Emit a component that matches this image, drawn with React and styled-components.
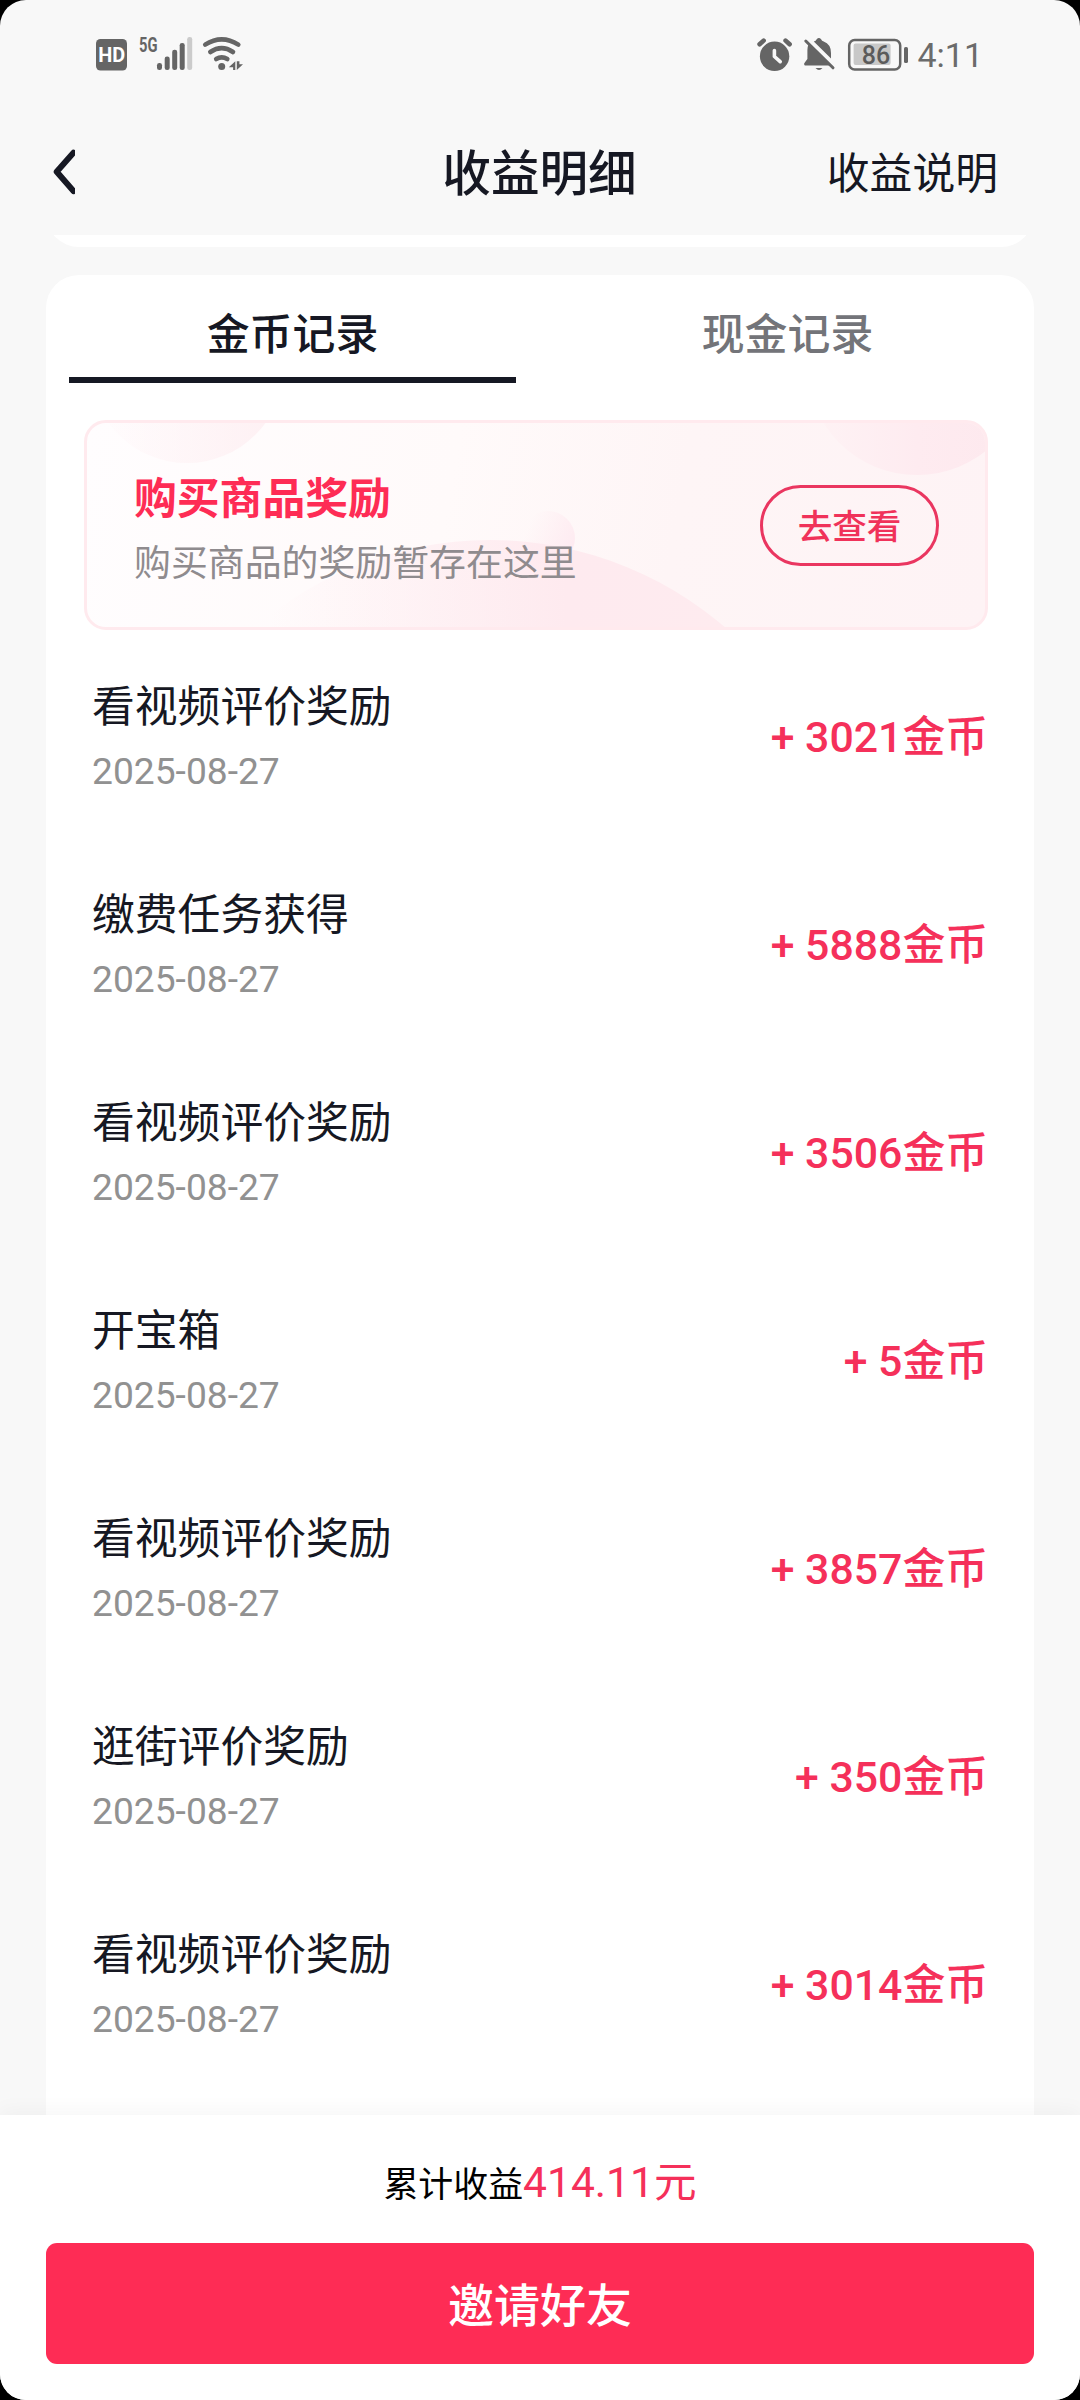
import { useState } from 'react';
import styled, { createGlobalStyle } from 'styled-components'

const GlobalStyle = createGlobalStyle`
    * {
        box-sizing: border-box;
    }

    body {
        margin: 0;
        background: #000;
        font-family: Roboto, "Noto Sans CJK SC", sans-serif;
        color: #161823;
    }
`

const Screen = styled.div`
    width: 1080px;
    height: 2400px;
    display: flex;
    flex-direction: column;
    overflow: hidden;
    border-radius: 26px;
    background: #f8f8f8;
`

const StatusBar = styled.div`
    flex: none;
    height: 108px;
    padding: 0 97px 0 96px;
    display: flex;
    justify-content: space-between;
    align-items: center;
    color: #656565;
`

const StatusGroup = styled.div`
    display: flex;
    align-items: center;
`

const Clock = styled.span`
    margin-left: 9px;
    padding-top: 1px;
    font-size: 34px;
    line-height: 40px;
    color: #6b6b6b;
`

const Header = styled.header`
    flex: none;
    height: 127px;
    padding: 0 82px 0 53px;
    display: grid;
    grid-template-columns: 1fr auto 1fr;
    align-items: center;
`

const BackButton = styled.button`
    display: flex;
    padding: 0;
    border: none;
    background: none;
    cursor: pointer;
`

const PageTitle = styled.h1`
    margin: 0;
    padding-top: 6px;
    transform: translateX(14px);
    font-size: 48.6px;
    line-height: 64px;
    font-weight: 500;
`

const HelpLink = styled.span`
    justify-self: end;
    padding-top: 5px;
    font-size: 42.8px;
    line-height: 64px;
`

const Body = styled.main`
    flex: 1;
    min-height: 0;
    display: flex;
    flex-direction: column;
    overflow: hidden;
    padding: 0 46px;
`

// bottom edge of the summary card, scrolled under the header
const SummaryCard = styled.div`
    flex: none;
    height: 100px;
    margin-top: -88.3px;
    border-radius: 33px;
    background: #fff;
`

const RecordCard = styled.section`
    flex: 1 0 auto;
    margin-top: 28px;
    border-radius: 33px 33px 0 0;
    background: #fff;
`

const Tabs = styled.div`
    display: flex;
    justify-content: space-between;
    padding: 0 23px;
`

const Tab = styled.button`
    width: 447px;
    height: 108px;
    padding: 19px 0 0;
    border: none;
    border-bottom: 6px solid ${props => props.$active ? '#161823' : 'transparent'};
    background: none;
    font-family: inherit;
    font-size: 42.9px;
    line-height: 60px;
    font-weight: 500;
    color: ${props => props.$active ? '#161823' : '#737479'};
    cursor: pointer;
`

const Banner = styled.div`
    position: relative;
    height: 210px;
    margin: 37px 46px 0 38px;
    padding: 0 46px 0 47px;
    display: flex;
    justify-content: space-between;
    align-items: center;
    overflow: hidden;
    border: 3px solid #ffeaee;
    border-radius: 22px;
    background: linear-gradient(100deg, #fffdfe 0%, #fffafa 40%, #fef5f6 65%, #fef3f5 100%);
`

const BannerArt = styled.svg`
    position: absolute;
    left: -3px;
    top: -3px;
`

const BannerText = styled.div`
    position: relative;
    display: flex;
    flex-direction: column;
    gap: 9px;
    padding-top: 10px;
`

const BannerTitle = styled.span`
    font-size: 42.8px;
    line-height: 60px;
    font-weight: 700;
    color: #fe2c55;
`

const BannerNote = styled.span`
    font-size: 36.9px;
    line-height: 52px;
    color: #8f8b8e;
`

const ViewButton = styled.button`
    position: relative;
    width: 179px;
    height: 81px;
    margin-top: 2px;
    padding: 3px 0 0;
    border: 3px solid #ea3660;
    border-radius: 41px;
    background: none;
    font-family: inherit;
    font-size: 34.6px;
    line-height: 50px;
    font-weight: 500;
    color: #f0325a;
    cursor: pointer;
`

const RecordList = styled.ul`
    margin: 3px 0 0;
    padding: 0 46px;
    list-style: none;
`

const RecordRow = styled.li`
    height: 208px;
    display: flex;
    justify-content: space-between;
    align-items: center;
`

const RecordInfo = styled.div`
    display: flex;
    flex-direction: column;
    gap: 8px;
`

const RecordName = styled.span`
    font-size: 42.8px;
    line-height: 60px;
`

const RecordDate = styled.span`
    font-size: 37.2px;
    line-height: 52px;
    color: #919191;
`

const Amount = styled.span`
    padding-top: 1px;
    font-size: 42.8px;
    line-height: 60px;
    font-weight: 500;
    color: #f5305a;
`

const Footer = styled.footer`
    position: relative;
    flex: none;
    height: 285px;
    padding: 35px 46px 36px;
    display: flex;
    flex-direction: column;
    justify-content: space-between;
    background: #fff;
    box-shadow: 0 -4px 20px rgba(0, 0, 0, 0.04);
`

const Total = styled.div`
    text-align: center;
    font-size: 34.9px;
    line-height: 64px;
    color: #000;
`

const TotalValue = styled.span`
    font-size: 42.6px;
    color: #f5305a;
`

const InviteButton = styled.button`
    height: 121px;
    padding: 5px 0 0;
    border: none;
    border-radius: 11px;
    background: #fe2c55;
    font-family: inherit;
    font-size: 46px;
    line-height: 64px;
    font-weight: 500;
    color: #fff;
    cursor: pointer;
`

const records = [
    { name: '看视频评价奖励', date: '2025-08-27', coins: 3021 },
    { name: '缴费任务获得', date: '2025-08-27', coins: 5888 },
    { name: '看视频评价奖励', date: '2025-08-27', coins: 3506 },
    { name: '开宝箱', date: '2025-08-27', coins: 5 },
    { name: '看视频评价奖励', date: '2025-08-27', coins: 3857 },
    { name: '逛街评价奖励', date: '2025-08-27', coins: 350 },
    { name: '看视频评价奖励', date: '2025-08-27', coins: 3014 },
]

const SignalIcons = () => (
    <svg width="150" height="52" viewBox="96 28 150 52" fill="currentColor">
        <rect x="96" y="39" width="31" height="31.5" rx="4.5" />
        <text x="98.3" y="61.8" fontSize="20.5" fontWeight="700" fill="#fff" textLength="27" lengthAdjust="spacingAndGlyphs">HD</text>
        <text x="139" y="52" fontSize="20.5" fontWeight="700" textLength="18.5" lengthAdjust="spacingAndGlyphs">5G</text>
        <rect x="157" y="63" width="5" height="7" rx="2.3" />
        <rect x="164.7" y="56.5" width="5" height="13.5" rx="2.3" />
        <rect x="172.2" y="49.7" width="5" height="20.3" rx="2.3" />
        <rect x="179.7" y="43" width="5" height="27" rx="2.3" />
        <rect x="187.2" y="37" width="5" height="33" rx="2.3" fill="#cbcbcb" />
        <g fill="none" stroke="currentColor" strokeWidth="4.6" strokeLinecap="round">
            <path d="M205.2 44.6Q221.7 34.2 238.3 44.6" />
            <path d="M210.3 52Q221.7 44.2 233 52" />
            <path d="M216.2 59Q221.7 55.6 227.3 59" />
        </g>
        <circle cx="221.7" cy="66.6" r="3.5" />
        <path d="M235.300 61.300V70h-2.200v-2.700H228.800zM236.800 70v-8.700h2.600V64.200h3.600z" />
    </svg>
)

const DeviceIcons = () => (
    <svg width="151" height="52" viewBox="757 28 151 52" fill="currentColor">
        <circle cx="774.6" cy="56.3" r="14.7" />
        <g fill="none" stroke="currentColor" strokeWidth="4.6" strokeLinecap="round">
            <path d="M759.6 44.2l4-3.6M789.6 44.2l-4-3.6" />
        </g>
        <path d="M774.4 50.5v6l5.8 5.2" fill="none" stroke="#f8f8f8" strokeWidth="3.6" strokeLinecap="round" strokeLinejoin="round" />
        <path d="M808.6 44L830.5 65.6H804.8q-1.6-1.400 0-3l2.600-3.600V50q0-3 1.200-6zM813.800 41.600q2.200-.700 2.900-2.400 2.200-2.200 4.400 0 .700 1.700 2.600 2.300 7.300 2.700 7.300 11.500v5.500z" />
        <path d="M805.800 41L833 67.800" fill="none" stroke="currentColor" strokeWidth="3" strokeLinecap="round" />
        <path d="M815.500 68h7q-3.500 3.800-7 0z" />
        <rect x="849.2" y="40" width="51" height="29.400" rx="5.500" fill="none" stroke="currentColor" strokeWidth="2.500" />
        <rect x="853.600" y="43.600" width="37" height="21.400" rx="2" fill="#c8c8c8" />
        <text x="861.700" y="64" fontSize="25" fontWeight="500" fill="#5b5b5b">86</text>
        <rect x="904" y="47" width="4" height="16" rx="1.600" />
    </svg>
)

const BannerShapes = () => (
    <BannerArt width="904" height="210" viewBox="84 421 904 210">
        <defs>
            <linearGradient id="left" x1="0" x2="1" y1="0" y2="0">
                <stop offset="0.1" stopColor="#fef0f3" stopOpacity="0.1" />
                <stop offset="1" stopColor="#fef0f3" />
            </linearGradient>
            <linearGradient id="right" x1="0" x2="1" y1="0" y2="0">
                <stop offset="0" stopColor="#feedf1" stopOpacity="0.2" />
                <stop offset="0.5" stopColor="#feebf0" />
                <stop offset="1" stopColor="#fde8ed" />
            </linearGradient>
            <linearGradient id="hill" gradientUnits="userSpaceOnUse" x1="270" x2="727" y1="0" y2="0">
                <stop offset="0" stopColor="#feeaef" stopOpacity="0" />
                <stop offset="0.65" stopColor="#feeaef" />
                <stop offset="1" stopColor="#feebef" />
            </linearGradient>
            <linearGradient id="dot" x1="0" x2="1" y1="0.2" y2="0.6">
                <stop offset="0.15" stopColor="#feecf1" stopOpacity="0" />
                <stop offset="1" stopColor="#feebf1" />
            </linearGradient>
        </defs>
        <circle cx="187" cy="367" r="97" fill="url(#left)" />
        <circle cx="917" cy="366" r="110" fill="url(#right)" />
        <circle cx="548" cy="539" r="27" fill="url(#dot)" />
        <circle cx="490" cy="901" r="360" fill="url(#hill)" />
    </BannerArt>
)

const App = () => {
    const [tab, setTab] = useState('coin')

    return (
        <>
            <GlobalStyle />
            <Screen>
                <StatusBar>
                    <StatusGroup>
                        <SignalIcons />
                    </StatusGroup>
                    <StatusGroup>
                        <DeviceIcons />
                        <Clock>4:11</Clock>
                    </StatusGroup>
                </StatusBar>
                <Header>
                    <BackButton>
                        <svg width="22" height="46" viewBox="53 149 22 46" fill="none" stroke="#161823" strokeWidth="6" strokeLinecap="round" strokeLinejoin="round">
                            <path d="M73.500 152.700L56.700 171.800L73.500 191" />
                        </svg>
                    </BackButton>
                    <PageTitle>收益明细</PageTitle>
                    <HelpLink>收益说明</HelpLink>
                </Header>
                <Body>
                    <SummaryCard />
                    <RecordCard>
                        <Tabs>
                            <Tab $active={tab === 'coin'} onClick={() => setTab('coin')}>金币记录</Tab>
                            <Tab $active={tab === 'cash'} onClick={() => setTab('cash')}>现金记录</Tab>
                        </Tabs>
                        <Banner>
                            <BannerShapes />
                            <BannerText>
                                <BannerTitle>购买商品奖励</BannerTitle>
                                <BannerNote>购买商品的奖励暂存在这里</BannerNote>
                            </BannerText>
                            <ViewButton>去查看</ViewButton>
                        </Banner>
                        <RecordList>
                            {records.map((record, i) => (
                                <RecordRow key={i}>
                                    <RecordInfo>
                                        <RecordName>{record.name}</RecordName>
                                        <RecordDate>{record.date}</RecordDate>
                                    </RecordInfo>
                                    <Amount>+ {record.coins}金币</Amount>
                                </RecordRow>
                            ))}
                        </RecordList>
                    </RecordCard>
                </Body>
                <Footer>
                    <Total>累计收益<TotalValue>414.11元</TotalValue></Total>
                    <InviteButton>邀请好友</InviteButton>
                </Footer>
            </Screen>
        </>
    )
}

export default App
